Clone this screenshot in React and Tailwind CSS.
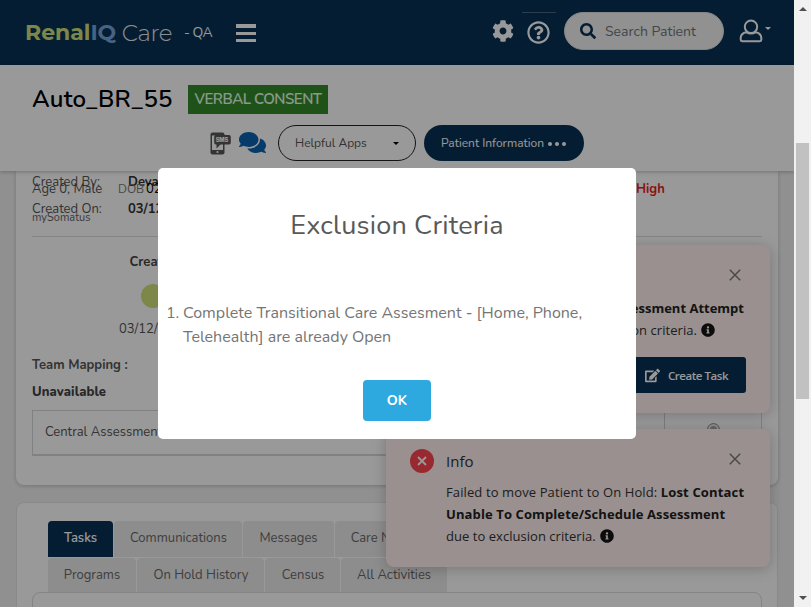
import React from "react";
import { FaCog, FaComments, FaEdit, FaInfoCircle, FaRegQuestionCircle, FaSearch } from "react-icons/fa";

const ui = "font-['Nunito','Lato',sans-serif]";
const toastFont = "font-['Open_Sans','Noto_Sans',sans-serif]";

function SmsIcon() {
  return (
    <svg width="21" height="23" viewBox="0 0 21 23" className="shrink-0">
      <rect x="0.5" y="0.5" width="14" height="22" rx="2" fill="#575757" />
      <rect x="2" y="3.5" width="11" height="14.5" fill="#fff" />
      <circle cx="7.5" cy="20" r="1.1" fill="#fff" />
      <path d="M6 3h13a1.8 1.8 0 0 1 1.8 1.8v6a1.8 1.8 0 0 1-1.8 1.8h-8.5l-4 4v-4H6a1.8 1.8 0 0 1-1.8-1.800v-6A1.8 1.8 0 0 1 6 3z" fill="#575757" />
      <text x="5.700" y="9.900" fontSize="5.600" fontWeight="800" fontFamily="Inter, sans-serif" fill="#fff" textLength="12.500">SMS</text>
    </svg>
  );
}

function UserIcon() {
  return (
    <svg width="24" height="24" viewBox="0 0 24 24" fill="none" stroke="#fff" strokeWidth="2" strokeLinejoin="round" className="-mt-[3px] ml-[15px] shrink-0">
      <circle cx="12" cy="7.800" r="6.200" />
      <path d="M7.500 13.200C4 13.800 1.700 16 1.700 19v1.800c0 .8.6 1.400 1.400 1.400h17.800c.8 0 1.400-.6 1.400-1.400V19c0-3-2.300-5.200-5.800-5.800-1.300 1-2.800 1.400-4.500 1.400s-3.200-.4-4.500-1.400z" />
    </svg>
  );
}

function CloseIcon() {
  return (
    <svg width="12" height="12" viewBox="0 0 12 12" stroke="#777" strokeWidth="1.400">
      <path d="M0.800 0.800 11.200 11.200M11.200 0.800 0.800 11.200" />
    </svg>
  );
}

function Header() {
  return (
    <header className="flex h-[65px] shrink-0 items-center bg-[#083154] text-white">
      <div className="ml-[25px] flex w-[149px] items-center font-['Montserrat','Inter',sans-serif] text-[22px] leading-[28px]">
        <span className="font-bold text-[#cfe27c]">Renal</span>
        <span className="font-bold tracking-[-0.2px] text-[#74a7dc]">IQ</span>
        <span className="ml-[6px] font-light text-[23px] tracking-[-0.4px] text-[#e8edf2]">Care</span>
      </div>
      <span className="ml-[10px] w-[40px] whitespace-nowrap text-[14px] tracking-[-0.5px]">- QA</span>
      <div className="ml-[12px] flex w-[20px] flex-col gap-[4px]">
        <span className="h-[4px] bg-white" />
        <span className="h-[3px] bg-white" />
        <span className="h-[3px] bg-white" />
      </div>
      <FaCog size={22} className="-mt-[3px] ml-[236px]" />
      <div className="-mt-[1px] ml-[8px] flex h-[41px] w-[34px] items-center justify-center border-t border-[#4a6883]">
        <FaRegQuestionCircle size={23} className="-mt-px -ml-px" />
      </div>
      <div className="ml-[8px] -mt-[3px] flex h-[38px] w-[160px] items-center rounded-full border border-[#ddd] bg-[#f2f2f2] pl-[15px]">
        <FaSearch size={16} color="#083154" />
        <span className="ml-[9px] whitespace-nowrap text-[14px] text-[#6c757d]">Search Patient</span>
      </div>
      <UserIcon />
      <span className="-mt-[8px] ml-[2px] border-x-[3px] border-t-[3px] border-x-transparent border-t-white" />
    </header>
  );
}

function PatientBar() {
  return (
    <section className="relative z-10 flex h-[106px] shrink-0 flex-col bg-white shadow-[0_1px_4px_rgba(0,0,0,0.25)]">
      <div className="mt-[20px] flex h-[29px] items-center pl-[32px]">
        <h1 className="-mt-[2px] w-[156px] whitespace-nowrap text-[24px] font-semibold tracking-[0.2px] text-black">Auto_BR_55</h1>
        <span className="flex h-[29px] w-[140px] items-center justify-center whitespace-nowrap bg-[#34892a] text-[15px] font-semibold tracking-[-0.5px] text-[#e6ffe6]">VERBAL CONSENT</span>
      </div>
      <div className="mt-[11px] flex h-[36px] items-center pl-[210px]">
        <SmsIcon />
        <FaComments size={27} className="-mt-[2px] ml-[8px]" color="#0b62ad" />
        <div className="ml-[12px] flex h-[36px] w-[138px] items-center justify-between rounded-full border border-[#222] pr-[16px] pl-[16px] text-[12px] text-[#555]">
          <span className="whitespace-nowrap">Helpful Apps</span>
          <span className="border-x-[3px] border-t-[3px] border-x-transparent border-t-black" />
        </div>
        <div className="ml-[8px] flex h-[36px] w-[160px] items-center rounded-full bg-[#083154] pl-[17px] text-[12px] text-white">
          <span className="w-[107px] whitespace-nowrap">Patient Information</span>
          <span className="mt-[2px] flex gap-[3px]">
            <i className="size-[4px] rounded-full bg-white" />
            <i className="size-[4px] rounded-full bg-white" />
            <i className="size-[4px] rounded-full bg-white" />
          </span>
        </div>
      </div>
    </section>
  );
}

function Tab({ label, className }) {
  return (
    <span className={"flex items-center justify-center whitespace-nowrap rounded-t-[4px] text-[13px] " + className}>{label}</span>
  );
}

function Details() {
  return (
    <section className="mx-[16px] h-[314px] shrink-0 rounded-b-[8px] bg-white px-[16px] text-[13px] text-[#555] shadow-[0_1px_4px_rgba(0,0,0,0.2)]">
      <div className="mt-px flex h-[20px] items-center leading-[20px]">
        <span className="w-[96px]">Created By:</span>
        <b className="text-[#333]">Devaraj</b>
      </div>
      <div className="mt-[8px] flex h-[20px] items-center">
        <span className="w-[96px]">Created On:</span>
        <b className="text-[#333]">03/12/2024</b>
      </div>
      <div className="mt-[16px] h-px bg-[#dcdcdc]" />
      <div className="mt-[16px] flex h-[20px] w-[240px] items-center justify-center font-bold text-[#444]">
        <span className="w-[45px]">Created</span>
      </div>
      <div className="mt-[11px] ml-[109px] size-[24px] rounded-full bg-[#d0e17a]" />
      <div className="mt-[11px] ml-[87px] h-[20px] leading-[20px]">03/12/2024</div>
      <div className="mt-[16px] h-[20px] font-bold leading-[20px]">Team Mapping :</div>
      <div className="mt-[7px] h-[20px] font-extrabold leading-[20px] tracking-[0.1px] text-[#444]">Unavailable</div>
      <div className="mt-[8px] flex h-[46px] items-center border border-b-2 border-[#d8d8d8] pl-[12px]">
        <span className="w-[619px]">Central Assessment Team</span>
        <div className="flex h-full flex-1 justify-center border-l border-[#d0d0d0] pt-[12px]">
          <span className="size-[13px] rounded-full border border-[#999] bg-[#aaa] shadow-[inset_0_0_0_2px_#eee]" />
        </div>
      </div>
    </section>
  );
}

function TabPanel() {
  return (
    <section className="mx-[16px] mt-[17px] h-[140px] shrink-0 rounded-t-[8px] border border-[#e4e4e4] bg-white px-[15px] pt-[18px] text-[#686868]">
      <div className="flex h-[36px] gap-px pl-[16px]">
        <Tab label="Tasks" className="w-[65px] bg-[#083154] font-semibold text-white" />
        <Tab label="Communications" className="w-[128px] bg-[#ebebeb] pl-px" />
        <Tab label="Messages" className="w-[91px] bg-[#ebebeb]" />
        <Tab label="Care Notes" className="w-[96px] bg-[#ebebeb]" />
      </div>
      <div className="mt-px flex h-[34px] gap-px pl-[16px]">
        <Tab label="Programs" className="w-[88px] bg-[#ebebeb] pt-[2px]" />
        <Tab label="On Hold History" className="w-[127px] bg-[#ebebeb] pt-[2px] pl-px" />
        <Tab label="Census" className="w-[75px] bg-[#ebebeb] pt-[2px] pl-px" />
        <Tab label="All Activities" className="w-[106px] bg-[#ebebeb] pt-[2px]" />
      </div>
      <div className="h-[40px] rounded-t-[8px] border border-[#dcdcdc] bg-white" />
    </section>
  );
}

function Toast({ title, children, className, action }) {
  return (
    <article className={"absolute left-[386px] z-20 w-[384px] rounded-[8px] bg-[#fff0ee] pl-[24px] text-[#333] shadow-[0_2px_14px_rgba(0,0,0,0.22)] " + toastFont + " " + className}>
      <div className="mt-[20px] flex h-[24px] items-center">
        <span className="flex size-[24px] items-center justify-center rounded-full bg-[#ff4550]">
          <svg width="10" height="10" viewBox="0 0 10 10" stroke="#fff" strokeWidth="1.800"><path d="M1 1 9 9M9 1 1 9" /></svg>
        </span>
        <span className="ml-[12px] w-[283px] text-[15px]">{title}</span>
        <span className="-mt-[4px]"><CloseIcon /></span>
      </div>
      <div className="mt-[8px] ml-[36px] whitespace-nowrap text-[13px] leading-[22px] tracking-[0.11px]">{children}</div>
      {action}
    </article>
  );
}

function Scrollbar() {
  return (
    <aside className="flex w-[17px] shrink-0 flex-col items-center bg-[#f1f1f1]">
      <span className="mt-[7px] border-x-4 border-b-4 border-x-transparent border-b-[#505050]" />
      <span className="mt-[132px] h-[256px] w-[13px] bg-[#c1c1c1]" />
      <span className="mt-auto mb-[7px] border-x-4 border-t-4 border-x-transparent border-t-[#505050]" />
    </aside>
  );
}

export default function App() {
  return (
    <div className={"flex h-[607px] w-[811px] overflow-hidden " + ui}>
      <main className="relative flex w-[794px] flex-col overflow-hidden bg-[#f1f1f1]">
        <Header />
        <PatientBar />
        <Details />
        <TabPanel />

        <div className="absolute top-[179px] left-[32px] flex w-[740px] items-center text-[13px] leading-[20px] text-[#555]">
          <span className="w-[86px]">Age 0, Male</span>
          <span className="w-[28px] text-[12px] text-[#777]">DOB</span>
          <span className="w-[489px] text-black">02/02/2024</span>
          <b className="ml-px text-[#e81c24]">High</b>
        </div>
        <span className="absolute top-[210px] left-[32px] text-[11px] leading-[16px] text-[#666]">mySomatus</span>

        <Toast title="Info" className="top-[245px] h-[168px]" action={
          <div className="mt-[16px] ml-[196px] flex h-[36px] w-[140px] items-center rounded-[3px] bg-[#083154] pl-[39px] text-[12px] font-semibold text-white">
            <FaEdit size={15} />
            <span className="mt-px ml-[8px] whitespace-nowrap text-[11.500px] tracking-[-0.450px]">Create Task</span>
          </div>
        }>
          <div className="w-[298px] text-right font-bold tracking-[0] text-[#222]">Unable To Complete Assessment Attempt</div>
          <div className="flex w-[269px] items-center justify-end gap-[4px] tracking-[0.05px]">due to exclusion criteria. <FaInfoCircle size={14} color="#151515" /></div>
        </Toast>

        <Toast title="Info" className="top-[429px] h-[138px]">
          <div>Failed to move Patient to On Hold: <b className="text-[#222] tracking-[0.15px]">Lost Contact</b></div>
          <div className="font-bold text-[#222]">Unable To Complete/Schedule Assessment</div>
          <div className="flex items-center gap-[4px] tracking-[0.04px]">due to exclusion criteria. <FaInfoCircle size={14} color="#151515" /></div>
        </Toast>

        <div className="absolute inset-0 z-30 bg-black/40" />
        <section className="absolute top-[168px] left-[158px] z-40 flex h-[271px] w-[478px] flex-col rounded-[5px] bg-white">
          <h2 className="mt-[39px] h-[38px] text-center text-[27px] leading-[38px] tracking-[0.2px] text-[#595959]">Exclusion Criteria</h2>
          <ol className="mt-[56px] flex h-[48px] pl-[8px] text-[16px] leading-[24px] text-[#757575]">
            <li className="flex">
              <span className="w-[17px]">1.</span>
              <span className="whitespace-nowrap">Complete Transitional Care Assesment - [Home, Phone,<br />Telehealth] are already Open</span>
            </li>
          </ol>
          <button className="mt-[31px] ml-[205px] h-[41px] w-[68px] rounded-[4px] bg-[#2da9df] text-[14px] font-bold text-white">OK</button>
        </section>
      </main>
      <Scrollbar />
    </div>
  );
}
